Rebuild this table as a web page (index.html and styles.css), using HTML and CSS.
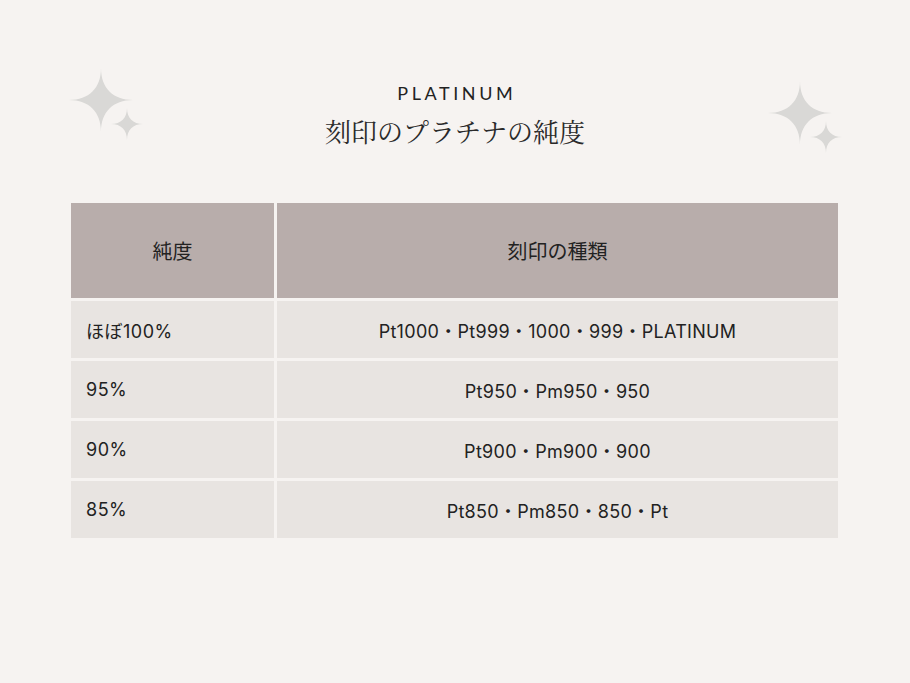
FILE: index.html
```html
<!DOCTYPE html>
<html lang="ja">
<head>
<meta charset="utf-8">
<title>刻印のプラチナの純度</title>
<link rel="stylesheet" href="styles.css">
</head>
<body>
<main class="page">
  <svg class="sparkles sparkles-left" viewBox="0 0 80 80" aria-hidden="true">
    <path d="M32 0 C32 20 44 32 64 32 C44 32 32 44 32 64 C32 44 20 32 0 32 C20 32 32 20 32 0Z"/>
    <path d="M58 40 C58 50 64 56 74 56 C64 56 58 62 58 72 C58 62 52 56 42 56 C52 56 58 50 58 40Z"/>
  </svg>
  <svg class="sparkles sparkles-right" viewBox="0 0 80 80" aria-hidden="true">
    <path d="M32 0 C32 20 44 32 64 32 C44 32 32 44 32 64 C32 44 20 32 0 32 C20 32 32 20 32 0Z"/>
    <path d="M58 40 C58 50 64 56 74 56 C64 56 58 62 58 72 C58 62 52 56 42 56 C52 56 58 50 58 40Z"/>
  </svg>

  <header class="heading">
    <p class="eyebrow">PLATINUM</p>
    <h1 class="title">刻印のプラチナの純度</h1>
  </header>

  <div class="table">
    <div class="cell head">純度</div>
    <div class="cell head">刻印の種類</div>

    <div class="cell purity">ほぼ100%</div>
    <div class="cell marks">Pt1000・Pt999・1000・999・PLATINUM</div>

    <div class="cell purity">95%</div>
    <div class="cell marks">Pt950・Pm950・950</div>

    <div class="cell purity">90%</div>
    <div class="cell marks">Pt900・Pm900・900</div>

    <div class="cell purity">85%</div>
    <div class="cell marks">Pt850・Pm850・850・Pt</div>
  </div>
</main>
</body>
</html>
```

FILE: styles.css
```css
* { box-sizing: border-box; }

html, body {
  margin: 0;
  padding: 0;
  background: #f6f3f1;
}

.page {
  position: relative;
  width: 910px;
  height: 683px;
  padding-top: 83px;
  font-family: "Inter", "Noto Sans CJK JP", sans-serif;
  color: #222;
}

.sparkles {
  position: absolute;
  width: 80px;
  height: 80px;
  fill: #d9d8d6;
}
.sparkles-left { left: 69px; top: 68px; }
.sparkles-right { left: 768px; top: 81px; }

.heading {
  text-align: center;
}

.eyebrow {
  margin: 0;
  font-family: "Lato", sans-serif;
  font-size: 18px;
  line-height: 20px;
  letter-spacing: 3.6px;
  padding-left: 3.6px;
  color: #222;
}

.title {
  margin: 13px 0 0;
  font-family: "Noto Serif CJK JP", "Noto Sans CJK JP", serif;
  font-weight: 400;
  font-size: 26px;
  line-height: 30px;
  color: #2a2a2a;
}

.table {
  margin: 57px 0 0 71px;
  width: 767px;
  display: grid;
  grid-template-columns: 203px 561px;
  grid-template-rows: 95px repeat(4, 57px);
  gap: 3px;
}

.cell {
  display: flex;
  align-items: center;
  background: #e8e4e1;
  font-size: 18px;
  letter-spacing: 0.3px;
  color: #222;
}

.head {
  background: #b8adab;
  justify-content: center;
  font-family: "Noto Sans CJK JP", sans-serif;
  font-size: 20px;
  letter-spacing: 0;
}

.purity {
  padding-left: 15px;
  letter-spacing: 0.5px;
}

.marks {
  justify-content: center;
}
```
